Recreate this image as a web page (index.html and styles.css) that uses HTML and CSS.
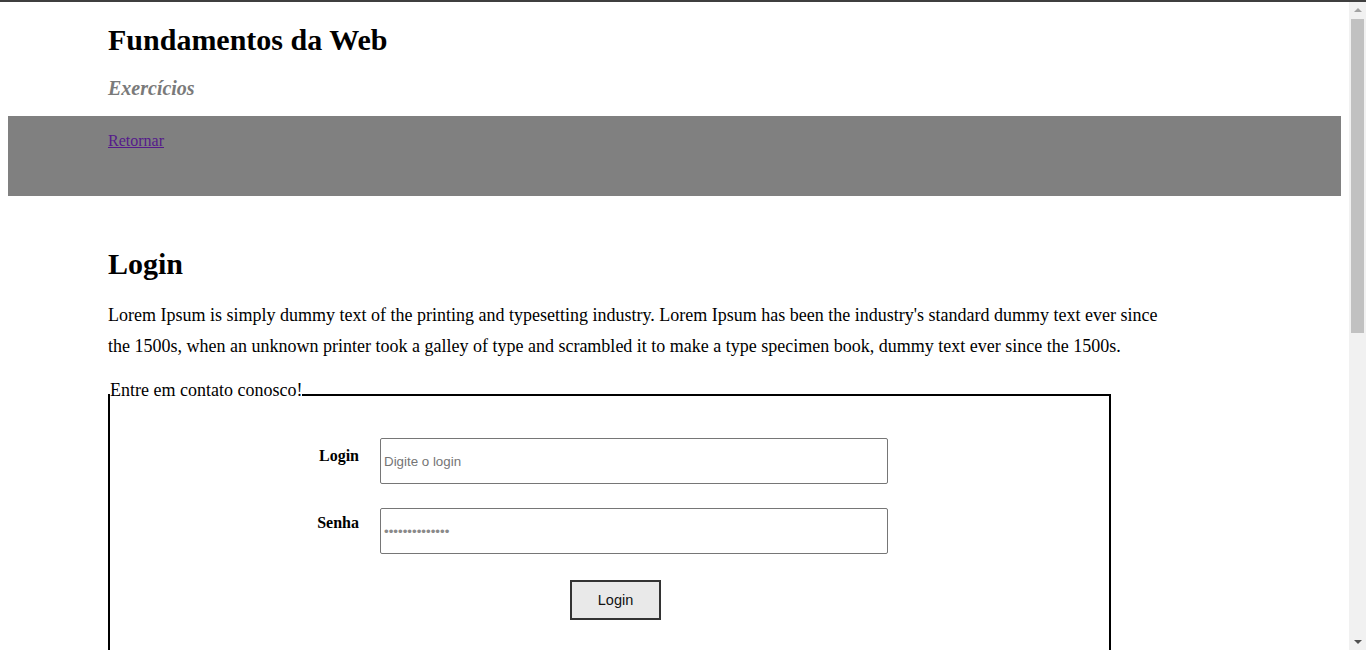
FILE: index.html
```html
<!DOCTYPE html>
<html lang="pt-BR">
<head>
<meta charset="utf-8">
<title>Fundamentos da Web - Login</title>
<link rel="stylesheet" href="styles.css">
</head>
<body>
<header class="topo">
  <h1 class="titulo">Fundamentos da Web</h1>
  <h2 class="subtitulo">Exercícios</h2>
</header>
<nav class="menu">
  <a class="menu-link" href="#">Retornar</a>
</nav>
<main class="conteudo">
  <h2 class="secao">Login</h2>
  <p class="texto">Lorem Ipsum is simply dummy text of the printing and typesetting industry. Lorem Ipsum has been the industry's standard dummy text ever since the 1500s, when an unknown printer took a galley of type and scrambled it to make a type specimen book, dummy text ever since the 1500s.</p>
  <form class="formulario" action="#">
    <fieldset class="caixa">
      <legend class="legenda">Entre em contato conosco!</legend>
      <div class="campos">
        <label class="rotulo rotulo-login" for="login">Login</label>
        <input class="entrada" id="login" type="text" placeholder="Digite o login">
        <label class="rotulo rotulo-senha" for="senha">Senha</label>
        <input class="entrada entrada-senha" id="senha" type="password" value="12345678901234">
      </div>
      <button class="botao" type="button">Login</button>
    </fieldset>
  </form>
</main>
<div class="barra-rolagem" aria-hidden="true">
  <span class="seta seta-cima"></span>
  <span class="trilho"><span class="polegar"></span></span>
  <span class="seta seta-baixo"></span>
</div>
</body>
</html>
```

FILE: styles.css
```css
html {
  border-top: 2px solid #3f3f3f;
}

body {
  margin: 8px 25px 8px 8px;
  font-family: "Liberation Serif", "Times New Roman", serif;
  font-size: 16px;
  color: #000;
  background: #fff;
}

.topo {
  padding: 0 100px;
}

.titulo {
  font-size: 30px;
  font-weight: bold;
  margin: 13px 0 20px;
}

.subtitulo {
  font-size: 20px;
  font-style: italic;
  font-weight: bold;
  color: #7a7a7a;
  margin: 0 0 16px;
}

.menu {
  box-sizing: border-box;
  height: 80px;
  padding: 16px 100px 0;
  background: #808080;
}

.menu-link {
  color: #551a8b;
}

.conteudo {
  padding: 31px 100px 560px;
}

.secao {
  font-size: 30px;
  font-weight: bold;
  margin: 20px 0 19px;
}

.texto {
  font-size: 18px;
  line-height: 31px;
  margin: 0 0 18px;
  max-width: 1070px;
}

.formulario {
  margin: 0;
}

.caixa {
  box-sizing: border-box;
  width: 1003px;
  margin: 0;
  padding: 0 0 120px;
  border: 2px solid #000;
}

.legenda {
  font-size: 18px;
  padding: 0 0 8px;
  margin: 0;
}

.campos {
  display: grid;
  grid-template-columns: 60px 508px;
  column-gap: 21px;
  row-gap: 24px;
  margin: 29px 0 0 189px;
}

.rotulo {
  font-weight: bold;
  text-align: right;
}

.rotulo-login {
  padding-top: 9px;
}

.rotulo-senha {
  padding-top: 6px;
}

.entrada {
  box-sizing: border-box;
  width: 508px;
  height: 46px;
  padding: 1px 3px;
  border: 1px solid #767676;
  border-radius: 2px;
  font-family: "Liberation Sans", Arial, sans-serif;
  font-size: 13.33px;
  color: #000;
}

.entrada::placeholder {
  color: #757575;
}

.entrada-senha {
  color: #8a8a8a;
}

.botao {
  box-sizing: border-box;
  display: block;
  width: 91px;
  height: 40px;
  margin: 26px 0 0 460px;
  background: #e9e9e9;
  border: 2px solid #333;
  font-family: "Liberation Sans", Arial, sans-serif;
  font-size: 14.5px;
  color: #111;
}

.barra-rolagem {
  position: fixed;
  top: 2px;
  right: 0;
  bottom: 0;
  width: 17px;
  display: flex;
  flex-direction: column;
  background: #f1f1f1;
}

.seta {
  position: relative;
  height: 17px;
  flex: none;
}

.seta::after {
  content: "";
  position: absolute;
  left: 5px;
  border-left: 4px solid transparent;
  border-right: 4px solid transparent;
}

.seta-cima::after {
  top: 6px;
  border-bottom: 4px solid #a3a3a3;
}

.seta-baixo::after {
  top: 7px;
  border-top: 4px solid #505050;
}

.trilho {
  flex: 1;
  display: flex;
  flex-direction: column;
  padding: 0 2px;
}

.polegar {
  display: block;
  height: 314px;
  background: #c1c1c1;
}
```
